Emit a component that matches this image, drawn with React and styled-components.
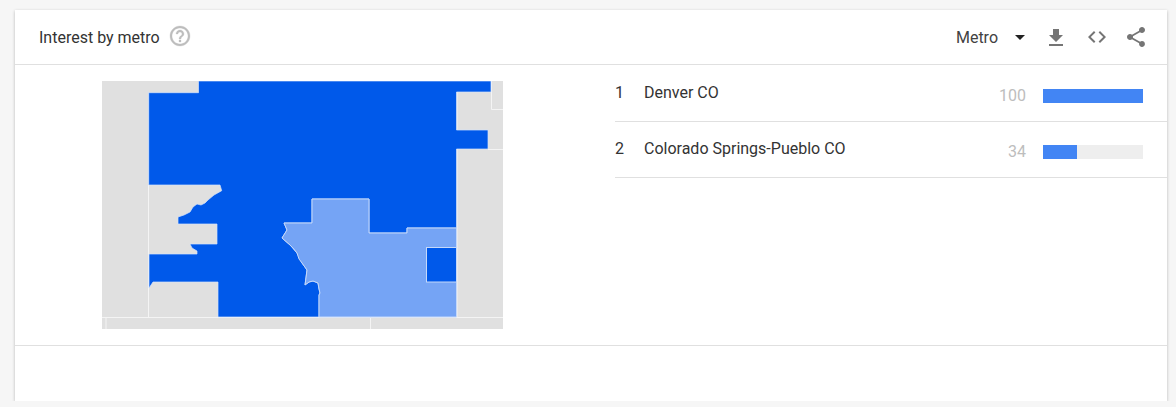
import React from "react";
import styled, { createGlobalStyle } from "styled-components";

const rows = [
  { rank: 1, name: "Denver CO", value: 100 },
  { rank: 2, name: "Colorado Springs-Pueblo CO", value: 34 },
];

function App() {
  return (
    <>
      <GlobalStyle />
      <Card>
        <Header>
          <Title>Interest by metro</Title>
          <HelpIcon viewBox="0 1 24 24">
            <path d="M11 18h2v-2h-2v2zm1-16C6.48 2 2 6.48 2 12s4.48 10 10 10 10-4.48 10-10S17.52 2 12 2zm0 18c-4.41 0-8-3.59-8-8s3.59-8 8-8 8 3.59 8 8-3.59 8-8 8zm0-14c-2.21 0-4 1.79-4 4h2c0-1.1.9-2 2-2s2 .9 2 2c0 2-3 1.75-3 5h2c0-2.25 3-2.5 3-5 0-2.21-1.79-4-4-4z" />
          </HelpIcon>
          <Actions>
            <Selector>Metro</Selector>
            <Caret />
            <ActionIcon viewBox="0 -1 24 24">
              <path d="M19 9h-4V3H9v6H5l7 7 7-7zM5 18v2h14v-2H5z" />
            </ActionIcon>
            <ActionIcon $gap={17} viewBox="0 0 24 24">
              <path d="M10.4 16.6 5.8 12l4.6-4.6L9 6l-6 6 6 6 1.4-1.4zm3.2 0 4.6-4.6-4.6-4.6L15 6l6 6-6 6-1.4-1.4z" />
            </ActionIcon>
            <ActionIcon $gap={15} viewBox="0 0 24 24">
              <path d="M18 16.08c-.76 0-1.44.3-1.96.77L8.91 12.7c.05-.23.09-.46.09-.7s-.04-.47-.09-.7l7.05-4.11c.54.5 1.25.81 2.04.81 1.66 0 3-1.34 3-3s-1.34-3-3-3-3 1.34-3 3c0 .24.04.47.09.7L8.04 9.81C7.5 9.31 6.79 9 6 9c-1.66 0-3 1.34-3 3s1.34 3 3 3c.79 0 1.5-.31 2.04-.81l7.12 4.16c-.05.21-.08.43-.08.65 0 1.61 1.31 2.92 2.92 2.92s2.92-1.31 2.92-2.92-1.31-2.92-2.92-2.92z" />
            </ActionIcon>
          </Actions>
        </Header>

        <Body>
          <MapColumn>
            <MapSvg viewBox="102 81 401 248">
              <rect x="102" y="81" width="401" height="248" fill="#e0e0e0" />
              <MapLine d="M148.5 92.5V317M102 317.5H503M106 317.5V329M370.5 317.5V329M457 92V317M491.5 81V109.5H503M488 149.5H503" />
              <path
                d="M198.5 81H491V92H456.5V130H488V149H456.5V228H407V233H369V199H312V223H284L287 230L282 238L290 245L297 253L302 263L307 270L305 285L309 282L313 281L318 283L319 289L320 293L319 295V317H218V282H153L149 288V254H197V251L192 248L190 244H217V224H178V217L184 215L190 212L193 207L197 204L201 205L205 203L208 200L214 195L221.7 190.7L220 185H148.7V92.7H198.5Z"
                fill="#0059ea"
                stroke="#d4e2fb"
                strokeWidth="0.7"
              />
              <path
                d="M312 199H369V233H407V228H456.5V317H319V295L320 293L319 289L318 283L313 281L309 282L305 285L307 270L302 263L299 259L297 253L293 248L290 245L282 238L287 230L284 223H312Z"
                fill="#75a4f5"
                stroke="#c4d8fa"
                strokeWidth="1"
              />
              <rect x="426.5" y="247.5" width="30" height="34.5" fill="#0059ea" stroke="#c4d8fa" />
            </MapSvg>
          </MapColumn>

          <List>
            {rows.map((row) => (
              <Row key={row.rank}>
                <Rank>{row.rank}</Rank>
                <Name>{row.name}</Name>
                <Value>{row.value}</Value>
                <Track>
                  <Fill style={{ width: `${row.value}%` }} />
                </Track>
              </Row>
            ))}
          </List>
        </Body>

        <Footer />
      </Card>
    </>
  );
}

export default App;

const GlobalStyle = createGlobalStyle`
body {
  margin: 0;
  background: #f6f6f6;
  font-family: Roboto, "Liberation Sans", sans-serif;
  overflow: hidden;
}
`;

const Card = styled.div`
width: 1152px;
height: 391px;
margin: 10px 0 0 15px;
background: #fff;
box-shadow: 0 1px 3px rgba(0,0,0,0.25);
display: flex;
flex-direction: column;
`;

const Header = styled.div`
height: 54px;
flex: none;
display: flex;
align-items: center;
padding: 0 19px 0 24px;
border-bottom: 1px solid #e0e0e0;
`;

const Title = styled.div`
font-size: 16px;
color: #333;
`;

const HelpIcon = styled.svg`
width: 24px;
height: 24px;
margin-left: 8px;
fill: #bdbdbd;
stroke: #bdbdbd;
stroke-width: 0.3;
`;

const Actions = styled.div`
margin-left: auto;
display: flex;
align-items: center;
`;

const Selector = styled.div`
font-size: 16px;
color: #424242;
`;

const Caret = styled.div`
width: 0;
height: 0;
margin: 0 19px 0 17px;
border-left: 5.5px solid transparent;
border-right: 5.5px solid transparent;
border-top: 5.5px solid #212121;
`;

const ActionIcon = styled.svg`
width: 24px;
height: 24px;
margin-left: ${(props) => props.$gap || 0}px;
fill: #757575;
`;

const Body = styled.div`
height: 280px;
flex: none;
display: grid;
grid-template-columns: 600px 1fr;
`;

const MapColumn = styled.div`
padding: 16px 0 0 87px;
`;

const MapSvg = styled.svg`
display: block;
width: 401px;
height: 248px;
`;

const MapLine = styled.path`
fill: none;
stroke: #f4f4f4;
stroke-width: 1;
`;

const List = styled.div`
display: flex;
flex-direction: column;
padding-top: 1px;
`;

const Row = styled.div`
height: 56px;
box-sizing: border-box;
flex: none;
display: flex;
align-items: center;
border-bottom: 1px solid #e0e0e0;
font-size: 16px;
color: #333;
`;

const Rank = styled.div`
width: 29px;
margin-bottom: 2px;
`;

const Name = styled.div`
flex: 1;
margin-bottom: 2px;
`;

const Value = styled.div`
font-size: 16px;
color: #bdbdbd;
margin: 4px 17px 0 0;
`;

const Track = styled.div`
width: 100px;
height: 14px;
margin: 4px 24px 0 0;
background: #eeeeee;
`;

const Fill = styled.div`
height: 100%;
background: #4285f4;
`;

const Footer = styled.div`
flex: 1;
border-top: 1px solid #e0e0e0;
`;
